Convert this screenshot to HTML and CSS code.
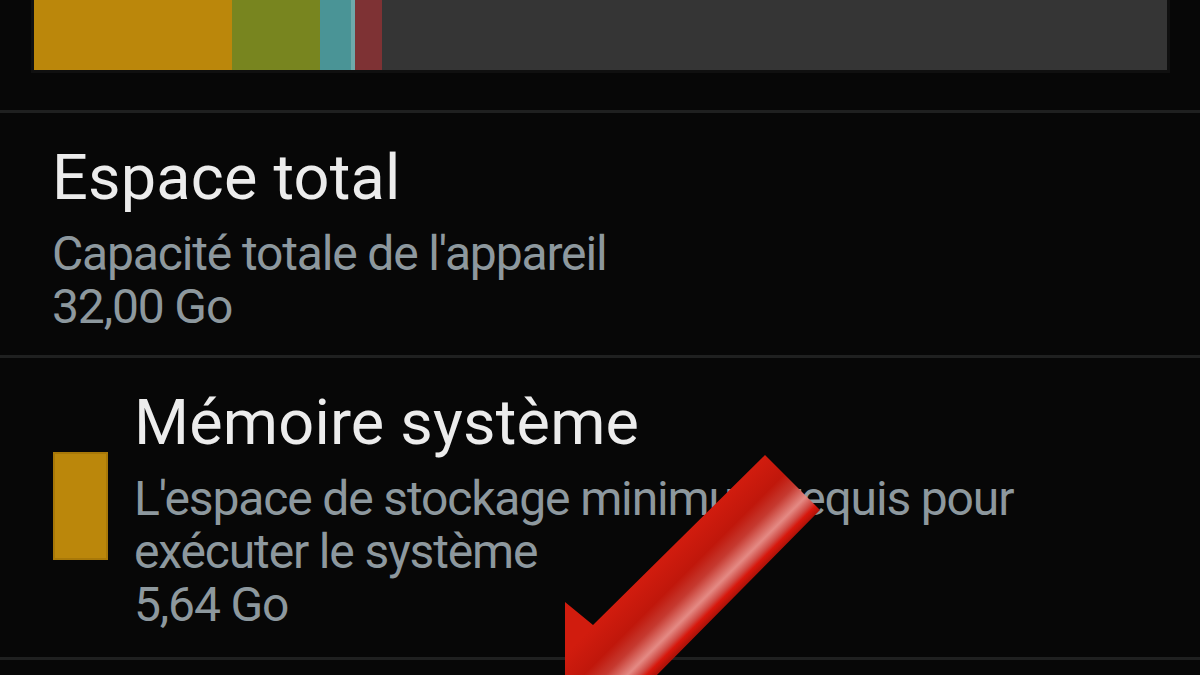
FILE: index.html
```html
<!DOCTYPE html>
<html lang="fr">
<head>
<meta charset="utf-8">
<title>Stockage</title>
<link rel="stylesheet" href="styles.css">
</head>
<body>
<div class="screen">
  <div class="usage">
    <div class="usage-bar">
      <span class="seg seg-system" style="width:198px"></span>
      <span class="seg seg-apps" style="width:88px"></span>
      <span class="seg seg-media" style="width:31px"></span>
      <span class="seg seg-gap" style="width:4px"></span>
      <span class="seg seg-misc" style="width:27px"></span>
      <span class="seg seg-free"></span>
    </div>
  </div>
  <div class="divider"></div>
  <div class="item">
    <div class="item-text">
      <div class="item-title">Espace total</div>
      <div class="item-summary">Capacité totale de l'appareil<br>32,00 Go</div>
    </div>
  </div>
  <div class="divider"></div>
  <div class="item item-legend">
    <div class="swatch"></div>
    <div class="item-text">
      <div class="item-title">Mémoire système</div>
      <div class="item-summary">L'espace de stockage minimum requis pour<br>exécuter le système<br>5,64 Go</div>
    </div>
  </div>
  <div class="divider divider-last"></div>

  <svg class="arrow" width="1200" height="675" viewBox="0 0 1200 675" aria-hidden="true">
    <defs>
      <linearGradient id="arrowGrad" gradientUnits="userSpaceOnUse" x1="765" y1="455" x2="820" y2="510">
        <stop offset="0" stop-color="#d11c0e"/>
        <stop offset="0.35" stop-color="#c0170b"/>
        <stop offset="0.55" stop-color="#c63a30"/>
        <stop offset="0.75" stop-color="#e48a84"/>
        <stop offset="0.86" stop-color="#cf4a44"/>
        <stop offset="0.92" stop-color="#d8170c"/>
        <stop offset="1" stop-color="#b01208"/>
      </linearGradient>
    </defs>
    <polygon points="765,455 820,510 650,682 673,710 565,710 565,602 593,625" fill="url(#arrowGrad)"/>
  </svg>
</div>
</body>
</html>
```
FILE: styles.css
```css
html, body {
  margin: 0;
  padding: 0;
  background: #070707;
}

.screen {
  position: relative;
  width: 1200px;
  height: 675px;
  overflow: hidden;
  background: #070707;
  font-family: Roboto, "Noto Sans", sans-serif;
}

.usage {
  height: 110px;
  padding: 0 30px 0 31px;
  box-sizing: border-box;
}

.usage-bar {
  display: flex;
  height: 73px;
  border: 3px solid #101010;
  border-top: 0;
  box-sizing: border-box;
  background: #111;
}

.seg {
  display: block;
  height: 70px;
}

.seg-system { background: #bb870b; }
.seg-apps { background: #78851f; }
.seg-media { background: #4a9496; }
.seg-gap { background: #6fa9ab; }
.seg-misc { background: #7e3234; }
.seg-free { flex: 1; background: #353535; }

.divider {
  height: 3px;
  background: #1f2020;
}

.item {
  display: flex;
  align-items: flex-start;
  padding: 29px 0 22px 52px;
}

.item-legend {
  padding: 29px 0 26px 53px;
  gap: 26px;
}

.swatch {
  width: 55px;
  height: 108px;
  background: #bb870b;
  box-shadow: inset 0 0 0 2px #a87808;
  margin-top: 65px;
}

.item-text {
  display: flex;
  flex-direction: column;
  gap: 13px;
}

.item-title {
  font-size: 63px;
  line-height: 72px;
  color: #ececec;
  letter-spacing: 0.2px;
}

.item-summary {
  font-size: 48px;
  line-height: 53px;
  color: #8d989e;
  letter-spacing: -1.15px;
}

.arrow {
  position: absolute;
  left: 0;
  top: 0;
}
```
